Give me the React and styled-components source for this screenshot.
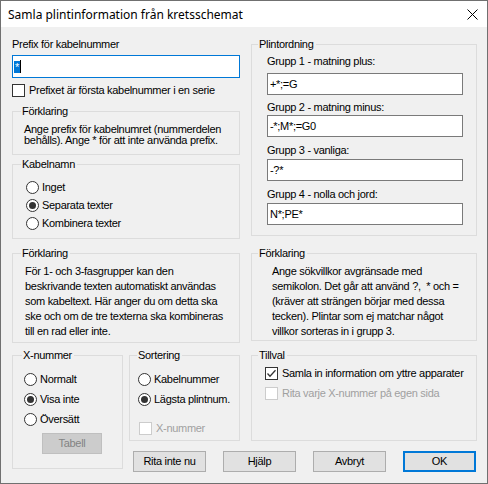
import React from 'react';
import styled, { createGlobalStyle } from 'styled-components';

const Global = createGlobalStyle`
  html, body { margin: 0; padding: 0; background: #ffffff; }
  body { font-family: "Liberation Sans", Arial, sans-serif; }
`;

const Window = styled.div`
  width: 488px;
  height: 484px;
  box-sizing: border-box;
  border: 1px solid #707070;
  background: #f0f0f0;
  display: flex;
  flex-direction: column;
  font-family: "Liberation Sans", Arial, sans-serif;
  font-size: 11px;
  letter-spacing: -0.3px;
  line-height: 13px;
  color: #000;
`;

const TitleBar = styled.div`
  height: 26px;
  flex: none;
  background: #ffffff;
  display: flex;
  align-items: center;
  justify-content: space-between;
  padding: 0 9px 0 7px;
`;

const Title = styled.span`
  font-family: "Noto Sans", "Segoe UI", sans-serif;
  font-size: 12px;
  letter-spacing: 0;
  color: #000;
`;

const Body = styled.div`
  padding: 11px 10px 0 11px;
  display: flex;
  flex-direction: column;
`;

const TopRow = styled.div`
  display: flex;
  gap: 11px;
  align-items: flex-start;
`;

const Column = styled.div`
  width: ${p => p.$w}px;
  margin-top: ${p => p.$mt || 0}px;
  display: flex;
  flex-direction: column;
`;

const Caption = styled.div`
  height: 13px;
  margin-top: ${p => p.$mt || 0}px;
  white-space: nowrap;
`;

const Field = styled.div`
  box-sizing: border-box;
  width: ${p => (p.$w ? `${p.$w}px` : '100%')};
  height: ${p => p.$h || 22}px;
  margin-top: ${p => p.$mt || 0}px;
  background: #ffffff;
  border: 1px solid ${p => (p.$focus ? '#0078d7' : '#7a7a7a')};
  padding: 0 ${p => (p.$focus ? 1 : 2)}px;
  display: flex;
  align-items: center;
  white-space: nowrap;
`;

const Selected = styled.span`
  background: #0078d7;
  color: #ffffff;
  height: 12px;
  line-height: 13px;
  display: inline-flex;
  align-items: flex-start;
  padding: 0 1px;
`;

const Caret = styled.span`
  width: 1px;
  height: 13px;
  background: #000;
`;

const Group = styled.div`
  box-sizing: border-box;
  width: ${p => (p.$w ? `${p.$w}px` : '100%')};
  height: ${p => p.$h}px;
  margin-top: ${p => p.$mt || 0}px;
  border: 1px solid #dcdcdc;
  padding: 0 ${p => p.$pr || 0}px 0 ${p => p.$pl || 0}px;
  display: flex;
  flex-direction: column;
  align-items: flex-start;
  flex: none;
`;

const Legend = styled.div`
  margin: -7px 0 0 ${p => (p.$ml != null ? p.$ml : 8)}px;
  padding: 0 2px 0 1px;
  height: 13px;
  background: #f0f0f0;
  white-space: nowrap;
`;

const Explain = styled.div`
  margin-top: ${p => p.$mt || 0}px;
  line-height: ${p => p.$lh}px;
`;

const OptionRow = styled.div`
  display: flex;
  align-items: center;
  gap: ${p => p.$gap || 3}px;
  height: ${p => p.$h || 13}px;
  margin-top: ${p => p.$mt || 0}px;
  margin-left: ${p => p.$ml || 0}px;
  color: ${p => (p.$disabled ? '#a0a0a0' : '#000')};
  white-space: nowrap;
`;

const RadioCircle = styled.span`
  box-sizing: border-box;
  width: 13px;
  height: 13px;
  border-radius: 50%;
  border: 1px solid #333333;
  background: #ffffff;
  display: flex;
  align-items: center;
  justify-content: center;
  flex: none;
  &::after {
    content: '';
    width: 7px;
    height: 7px;
    border-radius: 50%;
    background: #333333;
    display: ${p => (p.$on ? 'block' : 'none')};
  }
`;

const Box = styled.span`
  box-sizing: border-box;
  width: 13px;
  height: 13px;
  border: 1px solid ${p => (p.$disabled ? '#cccccc' : '#333333')};
  background: #ffffff;
  display: flex;
  flex: none;
`;

const BottomRow = styled.div`
  display: flex;
  gap: 6px;
  margin-top: 12px;
  align-items: flex-start;
`;

const RightBlock = styled.div`
  display: flex;
  flex-direction: column;
`;

const SubRow = styled.div`
  display: flex;
  gap: 11px;
`;

const ButtonRow = styled.div`
  display: flex;
  gap: 17px;
  margin-top: 10px;
  padding-left: 4px;
`;

const Button = styled.div`
  box-sizing: border-box;
  width: ${p => p.$w || 73}px;
  height: 21px;
  margin-top: ${p => p.$mt || 0}px;
  margin-left: ${p => p.$ml || 0}px;
  display: flex;
  align-items: center;
  justify-content: center;
  background: ${p => (p.$disabled ? '#cccccc' : '#e1e1e1')};
  border: 1px solid ${p => (p.$default ? '#0078d7' : p.$disabled ? '#bfbfbf' : '#adadad')};
  box-shadow: ${p => (p.$default ? 'inset 0 0 0 1px #0078d7' : 'none')};
  color: ${p => (p.$disabled ? '#838383' : '#000')};
  white-space: nowrap;
`;

const CloseIcon = () => (
  <svg width="11" height="11" viewBox="0 0 11 11">
    <path d="M0.5 0.5 L10.5 10.5 M10.5 0.5 L0.5 10.5" stroke="#000" strokeWidth="1" fill="none" />
  </svg>
);

const Radio = ({ on, children, h = 18, mt = 0 }) => (
  <OptionRow $h={h} $mt={mt}>
    <RadioCircle $on={on} />
    <span>{children}</span>
  </OptionRow>
);

const Check = ({ on, disabled, children, mt = 0, ml = 0 }) => (
  <OptionRow $gap={4} $mt={mt} $ml={ml} $disabled={disabled}>
    <Box $disabled={disabled}>
      {on && (
        <svg width="11" height="11" viewBox="0 0 11 11">
          <polyline points="1.5,5.5 4,8.2 9.5,2.2" fill="none" stroke="#333" strokeWidth="1.3" />
        </svg>
      )}
    </Box>
    <span>{children}</span>
  </OptionRow>
);

export default function App() {
  return (
    <>
      <Global />
      <Window>
        <TitleBar>
          <Title>Samla plintinformation från kretsschemat</Title>
          <CloseIcon />
        </TitleBar>
        <Body>
          <TopRow>
            <Column $w={228}>
              <Caption>Prefix för kabelnummer</Caption>
              <Field $focus $h={23} $mt={4}>
                <Selected>*</Selected>
                <Caret />
              </Field>
              <Check mt={6}>Prefixet är första kabelnummer i en serie</Check>
              <Group $h={44} $mt={14} $pl={11}>
                <Legend $ml={-3}>Förklaring</Legend>
                <Explain $mt={6} $lh={11}>
                  Ange prefix för kabelnumret (nummerdelen<br />
                  behålls). Ange * för att inte använda prefix.
                </Explain>
              </Group>
              <Group $h={75} $mt={9} $pl={13}>
                <Legend $ml={-5}>Kabelnamn</Legend>
                <Radio mt={7}>Inget</Radio>
                <Radio on>Separata texter</Radio>
                <Radio>Kombinera texter</Radio>
              </Group>
              <Group $h={90} $mt={14} $pl={12}>
                <Legend $ml={-4}>Förklaring</Legend>
                <Explain $mt={4} $lh={15}>
                  För 1- och 3-fasgrupper kan den<br />
                  beskrivande texten automatiskt användas<br />
                  som kabeltext. Här anger du om detta ska<br />
                  ske och om de tre texterna ska kombineras<br />
                  till en rad eller inte.
                </Explain>
              </Group>
            </Column>
            <Column $w={226} $mt={6}>
              <Group $h={192} $pl={15}>
                <Legend $ml={-9}>Plintordning</Legend>
                <Caption $mt={4}>Grupp 1 - matning plus:</Caption>
                <Field $w={196} $mt={5}>+*;=G</Field>
                <Caption $mt={6}>Grupp 2 - matning minus:</Caption>
                <Field $w={196} $mt={1}>-*;M*;=G0</Field>
                <Caption $mt={7}>Grupp 3 - vanliga:</Caption>
                <Field $w={196} $mt={2}>-?*</Field>
                <Caption $mt={7}>Grupp 4 - nolla och jord:</Caption>
                <Field $w={196} $mt={2}>N*;PE*</Field>
              </Group>
              <Group $h={88} $mt={17} $pl={20}>
                <Legend $ml={-14}>Förklaring</Legend>
                <Explain $mt={4} $lh={15}>
                  Ange sökvillkor avgränsade med<br />
                  semikolon. Det går att använd ?,&nbsp; * och =<br />
                  (kräver att strängen börjar med dessa<br />
                  tecken). Plintar som ej matchar något<br />
                  villkor sorteras in i grupp 3.
                </Explain>
              </Group>
            </Column>
          </TopRow>
          <BottomRow>
            <Group $w={111} $h={114} $pl={11}>
              <Legend $ml={-2}>X-nummer</Legend>
              <Radio h={20} mt={7}>Normalt</Radio>
              <Radio h={20} on>Visa inte</Radio>
              <Radio h={20}>Översätt</Radio>
              <Button $disabled $w={60} $mt={4} $ml={18}>Tabell</Button>
            </Group>
            <RightBlock>
              <SubRow>
                <Group $w={111} $h={86} $pl={8}>
                  <Legend $ml={-1}>Sortering</Legend>
                  <Radio h={20} mt={7}>Kabelnummer</Radio>
                  <Radio h={20} on>Lägsta plintnum.</Radio>
                  <Check disabled mt={13} ml={1}>X-nummer</Check>
                </Group>
                <Group $w={226} $h={86} $pl={13}>
                  <Legend $ml={-7}>Tillval</Legend>
                  <Check on mt={5}>Samla in information om yttre apparater</Check>
                  <Check disabled mt={7}>Rita varje X-nummer på egen sida</Check>
                </Group>
              </SubRow>
              <ButtonRow>
                <Button>Rita inte nu</Button>
                <Button>Hjälp</Button>
                <Button>Avbryt</Button>
                <Button $default>OK</Button>
              </ButtonRow>
            </RightBlock>
          </BottomRow>
        </Body>
      </Window>
    </>
  );
}
